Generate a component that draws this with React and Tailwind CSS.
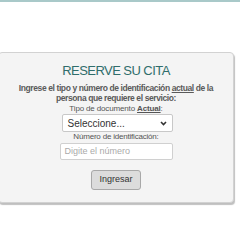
import React from "react";

export default function App() {
  return (
    <div className="w-[240px] h-[240px] bg-white overflow-hidden relative font-['Liberation_Sans',Arial,sans-serif]">
      {/* top rule */}
      <div className="h-[2px] bg-[#a9c9c9]" />

      <div className="mt-[50px] ml-[-2px] w-[236px] pb-[12px] bg-[#f4f4f4] border border-[#d2d2d2] rounded-[4px] shadow-[1px_2px_1px_rgba(0,0,0,0.25)] flex flex-col items-center">
        <h1 className="mt-[10px] text-[13px] leading-[16px] text-[#2f6d6b] tracking-[-0.55px]">
          RESERVE SU CITA
        </h1>

        <p className="mt-[4px] text-center text-[8.5px] leading-[10px] font-bold text-[#5a5a5a] tracking-[-0.4px] whitespace-nowrap">
          Ingrese el tipo y número de identificación <span className="underline">actual</span> de la
          <br />
          persona que requiere el servicio:
        </p>

        <label className="mt-[1px] text-[8px] leading-[10px] text-[#555] tracking-[-0.15px]">
          Tipo de documento <span className="underline font-bold">Actual</span>:
        </label>

        <div className="ml-[2px] w-[111px] h-[18px] bg-white border border-[#c8c8c8] rounded-[2px] flex items-center justify-between px-[5px]">
          <span className="text-[10px] text-[#333]">Seleccione...</span>
          <svg width="7" height="5" viewBox="0 0 7 5">
            <path d="M1 1 L3.5 3.5 L6 1" fill="none" stroke="#333" strokeWidth="1.6" />
          </svg>
        </div>

        <label className="text-[8px] leading-[10px] text-[#555] tracking-[-0.2px]">
          Número de identificación:
        </label>

        <div className="mt-[1px] w-[113px] h-[17px] bg-white border border-[#d0d0d0] rounded-[2px] flex items-center px-[4px]">
          <span className="text-[9px] text-[#aaa]">Digite el número</span>
        </div>

        <button className="mt-[10px] w-[50px] h-[20px] bg-[#dcdcdc] border border-[#a8a8a8] rounded-[3px] text-[9px] text-[#333] flex items-center justify-center">
          Ingresar
        </button>
      </div>
    </div>
  );
}
